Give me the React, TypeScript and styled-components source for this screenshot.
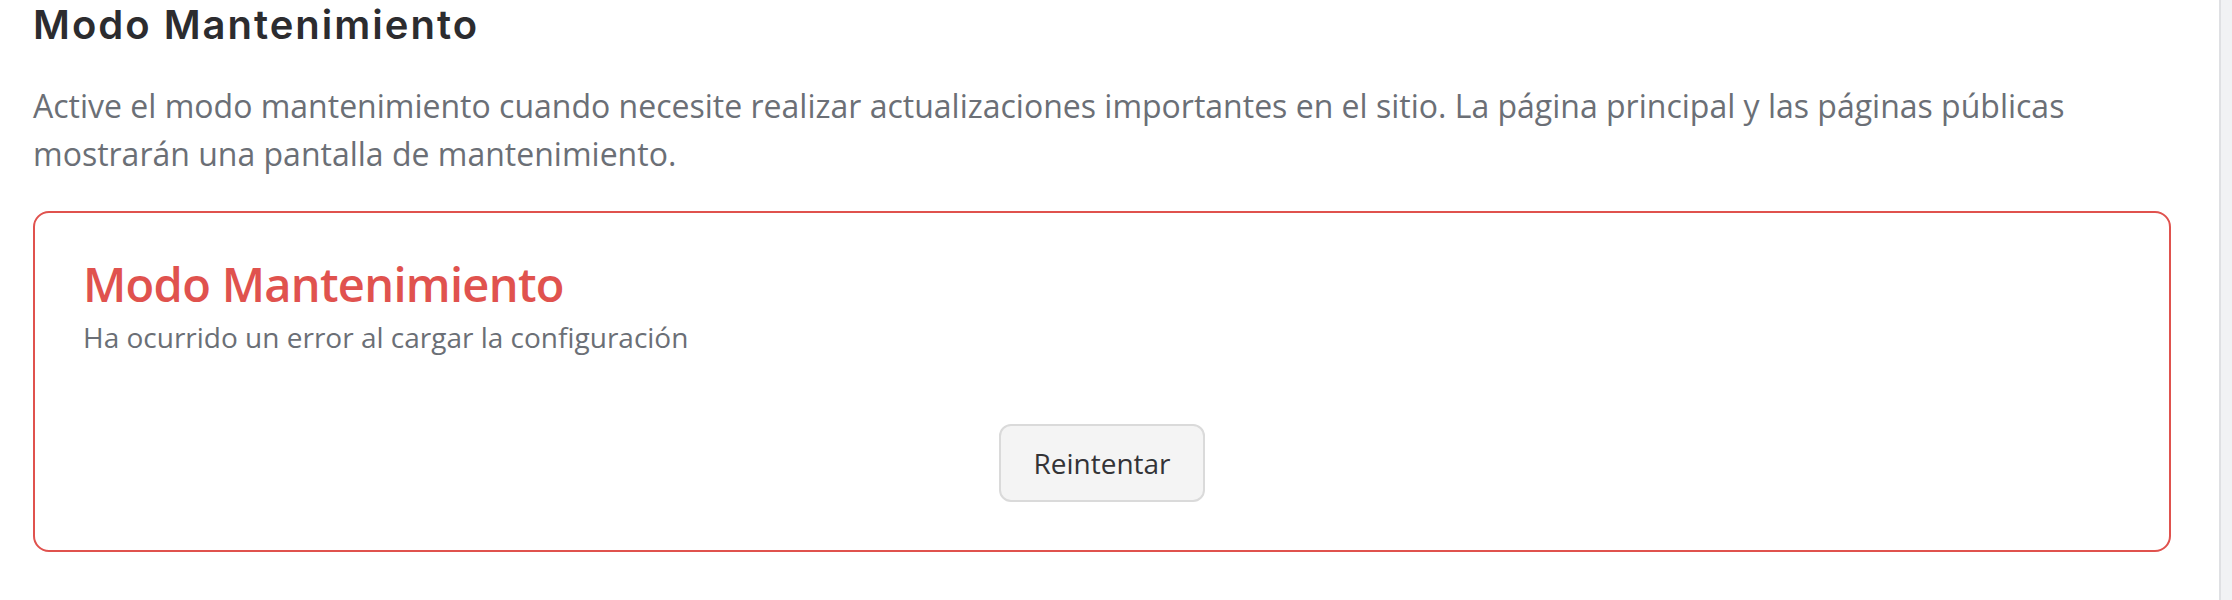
import React from "react";
import styled, { createGlobalStyle } from "styled-components";

const GlobalStyle = createGlobalStyle`
  html, body {
    margin: 0;
    padding: 0;
    background: #ffffff;
  }
  body {
    font-family: "Open Sans", "Liberation Sans", sans-serif;
  }
`;

const Page = styled.div`
  display: flex;
  height: 600px;
  width: 2232px;
  overflow: hidden;
  background: #ffffff;
`;

const Main = styled.main`
  flex: 1;
  padding: 0 48px 0 33px;
  display: flex;
  flex-direction: column;
`;

const Scrollbar = styled.div`
  width: 11px;
  flex: none;
  background: #f1f2f4;
  border-left: 2px solid #dfe0e3;
`;

const PageTitle = styled.h2`
  margin: 0;
  font-family: "Inter", "Liberation Sans", sans-serif;
  font-weight: 600;
  font-size: 40px;
  line-height: 49px;
  letter-spacing: 2px;
  color: #2c2c2f;
`;

const Description = styled.p`
  margin: 33px 0 0;
  font-size: 32px;
  line-height: 48px;
  color: #6b6f76;
`;

const ErrorCard = styled.section`
  margin-top: 33px;
  border: 2px solid #e0524e;
  border-radius: 16px;
  padding: 43px 48px 48px;
  display: flex;
  flex-direction: column;
`;

const CardTitle = styled.h3`
  margin: 0;
  font-size: 47px;
  line-height: 56px;
  font-weight: 600;
  letter-spacing: -0.7px;
  color: #e0524e;
`;

const CardMessage = styled.p`
  margin: 4px 0 0;
  font-size: 28px;
  line-height: 42px;
  color: #6b6f76;
`;

const Actions = styled.div`
  display: flex;
  justify-content: center;
  margin-top: 66px;
`;

const RetryButton = styled.button`
  font-family: "Open Sans", "Liberation Sans", sans-serif;
  font-size: 28px;
  line-height: 42px;
  color: #333336;
  background: #f4f4f4;
  border: 2px solid #dadada;
  border-radius: 12px;
  padding: 16px 32px;
  cursor: pointer;
`;

export default function App() {
  return (
    <>
      <GlobalStyle />
      <Page>
        <Main>
          <PageTitle>Modo Mantenimiento</PageTitle>
          <Description>
            Active el modo mantenimiento cuando necesite realizar actualizaciones importantes en el sitio. La página
            principal y las páginas públicas mostrarán una pantalla de mantenimiento.
          </Description>
          <ErrorCard>
            <CardTitle>Modo Mantenimiento</CardTitle>
            <CardMessage>Ha ocurrido un error al cargar la configuración</CardMessage>
            <Actions>
              <RetryButton type="button">Reintentar</RetryButton>
            </Actions>
          </ErrorCard>
        </Main>
        <Scrollbar />
      </Page>
    </>
  );
}
